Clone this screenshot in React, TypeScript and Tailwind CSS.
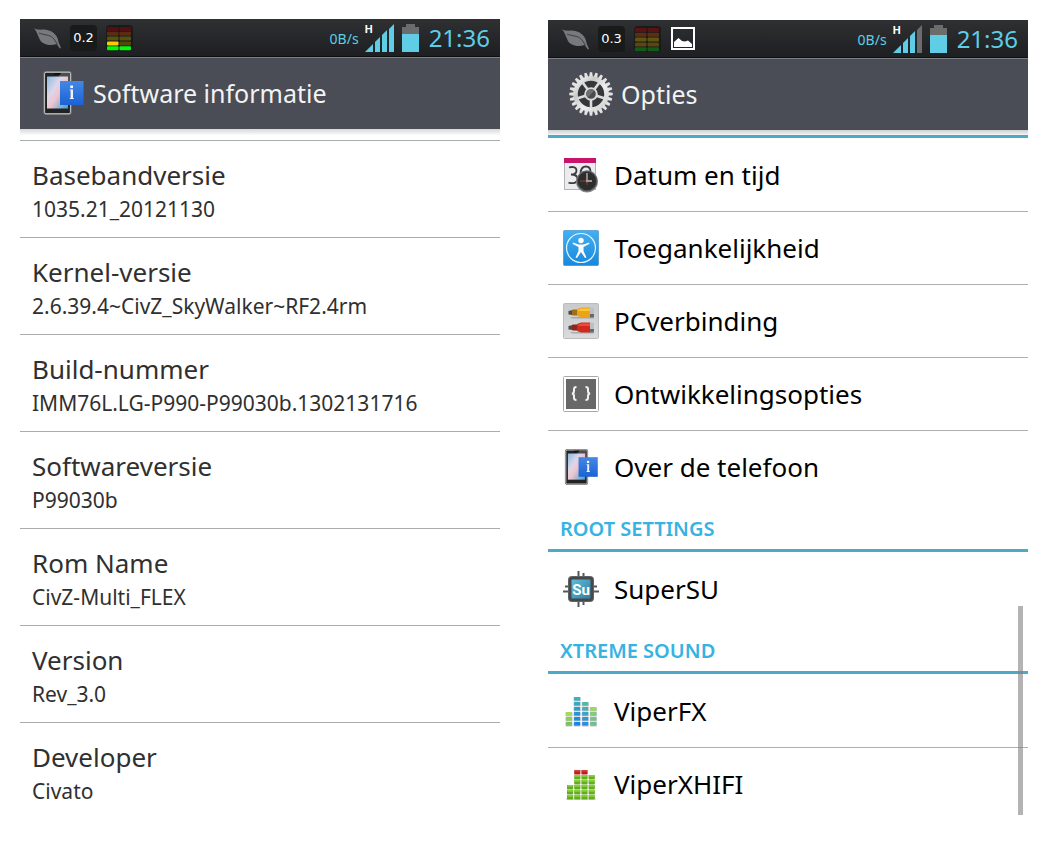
import React from 'react';

interface InfoItem {
  label: string;
  value: string;
}

interface OptionItem {
  label: string;
  icon: React.ReactNode;
}

interface OptionSection {
  title?: string;
  items: OptionItem[];
}

const INFO_ITEMS: InfoItem[] = [
  { label: 'Basebandversie', value: '1035.21_20121130' },
  { label: 'Kernel-versie', value: '2.6.39.4~CivZ_SkyWalker~RF2.4rm' },
  { label: 'Build-nummer', value: 'IMM76L.LG-P990-P99030b.1302131716' },
  { label: 'Softwareversie', value: 'P99030b' },
  { label: 'Rom Name', value: 'CivZ-Multi_FLEX' },
  { label: 'Version', value: 'Rev_3.0' },
  { label: 'Developer', value: 'Civato' },
];

/* ---------- Status bar ---------- */

function LeafIcon() {
  return (
    <svg width="27" height="21" viewBox="0 0 27 21" aria-hidden="true">
      <path d="M0 0C4 3 9 .5 15 2.500C21 4.500 24 9 24.500 14L27 20L26 20.500L22.500 16C17 18 9 17 6 12C4 8 3 4 0 0Z" fill="#77797a" />
      <path d="M5 5C10 7.500 16 6 20 11C21.500 13 22.500 15 23.500 16.500" fill="none" stroke="#3c3e40" strokeWidth="1" />
    </svg>
  );
}

// Each entry is a row of the meter, left cell and right cell
const METER_ACTIVE = [
  ['#541010', '#541010'],
  ['#5c2c12', '#5c2c12'],
  ['#55510e', '#55510e'],
  ['#ffc800', '#56460e'],
  ['#00fb04', '#00fb04'],
];

const METER_IDLE = [
  ['#5a1213', '#5a1213'],
  ['#602d14', '#602d14'],
  ['#5d5612', '#5d5612'],
  ['#5c4711', '#5c4711'],
  ['#125c17', '#125c17'],
];

function MeterIcon({ rows }: { rows: string[][] }) {
  return (
    <svg width="27" height="26" viewBox="0 0 27 26" aria-hidden="true">
      <rect width="27" height="26" rx="4" fill="#191a1a" />
      {rows.map(([left, right], i) => (
        <g key={i}>
          <rect x="1" y={2 + i * 4.8} width="11.500" height="4" rx="1" fill={left} />
          <rect x="13.500" y={2 + i * 4.8} width="11.500" height="4" rx="1" fill={right} />
        </g>
      ))}
    </svg>
  );
}

function PictureIcon() {
  return (
    <svg width="26" height="24" viewBox="0 0 26 24" aria-hidden="true">
      <rect x="2" y="1" width="22" height="21" fill="none" stroke="#fff" strokeWidth="2" />
      <path d="M4 20V15L8.500 11L12 14L15 14.500L18 13.500L22 17V20Z" fill="#fff" />
    </svg>
  );
}

function SignalIcon({ full }: { full: boolean }) {
  return (
    <svg width="29" height="28" viewBox="0 0 29 28" aria-hidden="true">
      <g fill="#5fcde6">
        <path d="M0 28L8 20V28Z" />
        <path d="M10 18L15 13V28H10Z" />
        <path d="M17 11L22 6V28H17Z" />
      </g>
      <path d="M24 5L29 0V28H24Z" fill={full ? '#5fcde6' : '#6c6c6c'} />
    </svg>
  );
}

function BatteryIcon() {
  return (
    <svg width="17" height="28" viewBox="0 0 17 28" aria-hidden="true">
      <path d="M4 0H13V3H17V11H0V3H4Z" fill="#6c6c6c" />
      <rect y="10" width="17" height="18" fill="#5fcde6" />
    </svg>
  );
}

interface StatusBarProps {
  load: string;
  meter: string[][];
  fullSignal: boolean;
  hasPicture?: boolean;
}

function StatusBar({ load, meter, fullSignal, hasPicture }: StatusBarProps) {
  return (
    <div className="flex h-[38px] items-center justify-between border-b border-[#0e0f11] bg-linear-to-b from-[#2e3032] to-[#1e1f22] pl-3.5 pr-2.5 pt-px">
      <div className="flex items-center gap-[9px]">
        <LeafIcon />
        <span className="flex h-[26px] w-[27px] items-center justify-center rounded bg-[#191a1a] font-['DejaVu_Sans',sans-serif] text-[13px] text-white">
          {load}
        </span>
        <MeterIcon rows={meter} />
        {hasPicture && <PictureIcon />}
      </div>
      <div className="flex items-center text-[#5fcde6]">
        <span className="mr-1.5 text-[14px]">0B/s</span>
        <div className="relative mr-2">
          <SignalIcon full={fullSignal} />
          <span className="absolute left-0 top-0 font-['Liberation_Sans',sans-serif] text-[11px] font-bold leading-[10px] text-white">H</span>
        </div>
        <BatteryIcon />
        <span className="ml-2.5 text-[24px] leading-8">21:36</span>
      </div>
    </div>
  );
}

function TitleBar({ title, icon }: { title: string; icon: React.ReactNode }) {
  return (
    <header className="flex h-[72px] items-center gap-2 border-t border-[#7c7f83] bg-[#4a4d55] pb-0.5 pl-[21px] text-[#f3f3f3]">
      {icon}
      <h1 className="text-[25px] leading-8">{title}</h1>
    </header>
  );
}

/* ---------- Row icons ---------- */

function PhoneIcon({ size, id }: { size: number; id: string }) {
  return (
    <svg width={size} height={size} viewBox="-2 0 44 44" aria-hidden="true">
      <defs>
        <linearGradient id={`${id}-screen`} x1="0" y1="0" x2="1" y2="1">
          <stop offset="0" stopColor="#8bbbe0" />
          <stop offset=".35" stopColor="#ddd6e8" />
          <stop offset=".55" stopColor="#eec4cf" />
          <stop offset="1" stopColor="#3aa0d0" />
        </linearGradient>
        <linearGradient id={`${id}-info`} x1="0" y1="0" x2="0" y2="1">
          <stop offset="0" stopColor="#4488e5" />
          <stop offset="1" stopColor="#1b62d5" />
        </linearGradient>
      </defs>
      <rect x="1" y=".7" width="27" height="42.600" rx="2" fill="#202224" stroke="#777" strokeWidth="1.400" />
      <rect x="1.600" y="1.300" width="25.800" height="41.400" rx="1.500" fill="none" stroke="#ddd" strokeWidth=".8" />
      <path d="M14 2H27V22Z" fill="#4c4e50" />
      <path d="M11 2H18L17 4H12Z" fill="#111" />
      <rect x="4" y="5.500" width="21" height="32" fill={`url(#${id}-screen)`} />
      <rect x="17" y="10" width="23.500" height="24" fill={`url(#${id}-info)`} />
      <rect x="27.300" y="14.500" width="2.700" height="2.600" fill="#fff" />
      <path d="M26.800 18.500H30V27H30.800V28H26.800V27H27.600V19.500H26.800Z" fill="#eef3fc" />
    </svg>
  );
}

function GearIcon() {
  const teeth = Array.from({ length: 24 }, (_, i) => i * 15);
  const spokes = [90, 162, 234, 306, 18];
  return (
    <svg width="44" height="44" viewBox="0 0 44 44" aria-hidden="true">
      <defs>
        <linearGradient id="gear-metal" x1="0" y1="0" x2="1" y2="1">
          <stop offset="0" stopColor="#f7f7f7" />
          <stop offset=".3" stopColor="#c9c9c9" />
          <stop offset=".6" stopColor="#efefef" />
          <stop offset="1" stopColor="#cdcdcd" />
        </linearGradient>
      </defs>
      <circle cx="22" cy="22" r="17" fill="#35373b" />
      {teeth.map((angle) => (
        <path key={angle} d="M19.900 6.500L20.800 .3H23.200L24.100 6.500Z" fill="#e3e3e3" transform={`rotate(${angle} 22 22)`} />
      ))}
      <circle cx="22" cy="22" r="15.500" fill="none" stroke="url(#gear-metal)" strokeWidth="4.500" />
      {spokes.map((angle) => (
        <path key={angle} d="M26 20.700H36V23.300H26Z" fill="#dcdcdc" transform={`rotate(${angle} 22 22)`} />
      ))}
      <circle cx="22" cy="22" r="5.800" fill="#4a4b4d" stroke="#d9d9d9" strokeWidth="2" />
      <path d="M18.600 25.400A4.800 4.800 0 0 1 25.400 18.600Z" fill="#6d7072" />
    </svg>
  );
}

function DateTimeIcon() {
  return (
    <svg width="36" height="36" viewBox="0 0 36 36" aria-hidden="true">
      <rect x="1.500" y="1.500" width="31" height="31" fill="#ececee" stroke="#b4b4b4" />
      <rect x="1" y="1" width="32" height="5" fill="#c9146c" />
      <g fill="none" stroke="#3d3d3f" strokeWidth="1.800">
        <path d="M6 10.500C8 9.800 13.500 9.300 13.500 13.500C13.500 16 12 17.500 8 17.500C12 17.500 14.500 19 14.500 22C14.500 26 10 27 5.500 25.600" />
        <path d="M17.500 16C18 10.500 21 9.500 23 9.500C26 9.500 27.500 11.500 27.500 15" />
      </g>
      <circle cx="24" cy="24.500" r="11" fill="#8e8f91" />
      <circle cx="24" cy="24" r="9.800" fill="#2d2d2e" stroke="#58595a" strokeWidth="1.200" />
      <path d="M24 16V24H29" fill="none" stroke="#bdbdbd" strokeWidth="1.300" />
      <path d="M17 24H24M24 24V28" stroke="#91524a" strokeWidth=".8" />
      <circle cx="24" cy="24" r="1.200" fill="#e58579" />
    </svg>
  );
}

function AccessibilityIcon() {
  return (
    <svg width="36" height="36" viewBox="0 0 36 36" aria-hidden="true">
      <defs>
        <linearGradient id="access-bg" x1="0" y1="0" x2="0" y2="1">
          <stop offset="0" stopColor="#43b0f3" />
          <stop offset="1" stopColor="#1788dc" />
        </linearGradient>
      </defs>
      <rect x=".5" y=".5" width="35" height="35" rx="1" fill="url(#access-bg)" stroke="#3c87bd" strokeOpacity=".6" />
      <circle cx="18" cy="18" r="14.500" fill="none" stroke="#e4f4fe" strokeWidth="1.200" />
      <circle cx="18" cy="10.500" r="2.700" fill="#fff" />
      <path d="M10 12.500L15.500 14.500H20.500L26 12.500L26.500 13.800L20.500 17V21L23.500 27.500L22 28L18 22L14 28L12.500 27.500L15.500 21V17L9.500 13.800Z" fill="#fff" />
    </svg>
  );
}

interface PlugProps {
  y: number;
  body: string;
  light: string;
  dark: string;
}

function Plug({ y, body, light, dark }: PlugProps) {
  return (
    <g transform={`translate(0 ${y})`}>
      <path d="M7 10H28L31 9V11.500H9Z" fill="#6b6b6b" opacity=".4" />
      <path d="M5.500 4L10 3V8L5.500 7.500Z" fill="#4c4948" />
      <rect x="9" y="2.500" width="6" height="6" rx="1" fill={dark} />
      <path d="M14 2L18 .5H27V10.500H18L14 9Z" fill={body} />
      <path d="M15 3L18 1.500H27V4H15Z" fill={light} />
      <path d="M27 .5H29.500Q31 .5 31 2V9Q31 10.500 29.500 10.500H27Z" fill="#bcc0c2" />
      <path d="M27 7H31V9Q31 10.500 29.500 10.500H27Z" fill="#65696b" />
    </g>
  );
}

function PlugIcon() {
  return (
    <svg width="36" height="36" viewBox="0 0 36 36" aria-hidden="true">
      <defs>
        <linearGradient id="plug-bg" x1="0" y1="0" x2="0" y2="1">
          <stop offset="0" stopColor="#c9cacb" />
          <stop offset="1" stopColor="#dadbdc" />
        </linearGradient>
      </defs>
      <rect x=".5" y=".5" width="35" height="35" rx="1" fill="url(#plug-bg)" stroke="#bbbcbd" />
      <Plug y={4} body="#eaa31b" light="#ffc62f" dark="#a36c16" />
      <Plug y={19} body="#d02a1f" light="#ef4a3b" dark="#8f241c" />
    </svg>
  );
}

function DeveloperIcon() {
  return (
    <svg width="36" height="36" viewBox="0 0 36 36" aria-hidden="true">
      <rect x=".5" y=".5" width="35" height="35" rx="1" fill="#fff" stroke="#a9a9a9" />
      <rect x="3" y="3" width="30" height="30" fill="#686868" />
      <g fill="none" stroke="#f2f2f2" strokeWidth="2">
        <path d="M13.500 11C11.500 11 11 11.500 11 13V15C11 16.700 10.300 17.500 8.800 17.500C10.300 17.500 11 18.300 11 20V22C11 23.500 11.500 24 13.500 24" />
        <path d="M22.500 11C24.500 11 25 11.500 25 13V15C25 16.700 25.700 17.500 27.200 17.500C25.700 17.500 25 18.300 25 20V22C25 23.500 24.500 24 22.500 24" />
      </g>
    </svg>
  );
}

function SuperSUIcon() {
  return (
    <svg width="36" height="36" viewBox="0 0 36 36" aria-hidden="true">
      <defs>
        <linearGradient id="su-bg" x1="0" y1="0" x2="1" y2="1">
          <stop offset="0" stopColor="#62bcd8" />
          <stop offset="1" stopColor="#2e7fa0" />
        </linearGradient>
      </defs>
      <path d="M15.500 0V36M20.500 2V34M0 20.500H36M2 15.500H34" stroke="#55585a" strokeWidth="2" />
      <rect x="5.500" y="5.500" width="25" height="25" rx="3" fill="#46484b" stroke="#5f6264" />
      <rect x="8.500" y="8.500" width="19" height="19" rx="1" fill="url(#su-bg)" />
      <text x="18" y="24" textAnchor="middle" fontFamily="Roboto, sans-serif" fontWeight="bold" fontSize="15" fill="#fff">Su</text>
    </svg>
  );
}

const VIPER_FX_COLUMNS = [
  ['#7bbf62', '#8ccf55', '#a4dc55'],
  ['#1684e5', '#1c8ede', '#2496d8', '#2b9dce', '#36a9c4', '#3eb0ba'],
  ['#2a8de0', '#3098d2', '#3ba3c7', '#45afba', '#51b9a7'],
  ['#6fbe90', '#76c486', '#80cb74', '#98dc55'],
];

function ViperFXIcon() {
  return (
    <svg width="36" height="36" viewBox="0 0 36 36" aria-hidden="true">
      {VIPER_FX_COLUMNS.map((cells, col) =>
        cells.map((color, i) => (
          <g key={`${col}-${i}`}>
            <rect x={2.5 + col * 8.1} y={29 - i * 5} width="7" height="4.600" rx=".8" fill="#b9bdc2" />
            <rect x={3 + col * 8.1} y={29 - i * 5} width="6" height="3.600" rx=".6" fill={color} />
          </g>
        ))
      )}
    </svg>
  );
}

const VIPER_HIFI_COLUMNS = [3, 6, 6, 5];

function ViperXHIFIIcon() {
  return (
    <svg width="36" height="36" viewBox="0 0 36 36" aria-hidden="true">
      <rect x="3" y="32" width="30" height="2" rx="1" fill="#ddd" />
      {VIPER_HIFI_COLUMNS.map((count, col) =>
        Array.from({ length: count }, (_, i) => (
          <g key={`${col}-${i}`}>
            <rect x={4 + col * 7.2} y={29 - i * 5} width="6.200" height="4.400" rx=".6" fill={i === 5 ? '#b8201b' : '#63ad1e'} />
            <rect x={4.5 + col * 7.2} y={29 - i * 5} width="5.200" height="1.800" rx=".5" fill={i === 5 ? '#d0403a' : '#8bd03c'} />
          </g>
        ))
      )}
    </svg>
  );
}

const OPTION_SECTIONS: OptionSection[] = [
  {
    items: [
      { label: 'Datum en tijd', icon: <DateTimeIcon /> },
      { label: 'Toegankelijkheid', icon: <AccessibilityIcon /> },
      { label: 'PCverbinding', icon: <PlugIcon /> },
      { label: 'Ontwikkelingsopties', icon: <DeveloperIcon /> },
      { label: 'Over de telefoon', icon: <PhoneIcon size={36} id="about" /> },
    ],
  },
  {
    title: 'ROOT SETTINGS',
    items: [{ label: 'SuperSU', icon: <SuperSUIcon /> }],
  },
  {
    title: 'XTREME SOUND',
    items: [
      { label: 'ViperFX', icon: <ViperFXIcon /> },
      { label: 'ViperXHIFI', icon: <ViperXHIFIIcon /> },
    ],
  },
];

/* ---------- Screens ---------- */

function SoftwareInfoScreen() {
  return (
    <section>
      <StatusBar load="0.2" meter={METER_ACTIVE} fullSignal />
      <TitleBar title="Software informatie" icon={<PhoneIcon size={44} id="info" />} />
      <div className="h-[11px] bg-linear-to-b from-[#d8d8d8] to-white to-60%" />
      <dl>
        {INFO_ITEMS.map((item) => (
          <div key={item.label} className="h-[97px] border-t border-[#a9adaf] pl-3 pt-4 text-[#303030]">
            <dt className="text-[26px] leading-9">{item.label}</dt>
            <dd className="text-[21px] leading-8">{item.value}</dd>
          </div>
        ))}
      </dl>
    </section>
  );
}

function OptionsScreen() {
  return (
    <section className="relative mt-px">
      <StatusBar load="0.3" meter={METER_IDLE} fullSignal={false} hasPicture />
      <TitleBar title="Opties" icon={<GearIcon />} />
      <div className="h-[5px] bg-linear-to-b from-[#cfcfcf] to-[#f4f4f4]" />
      {OPTION_SECTIONS.map((section, i) => (
        <div key={i}>
          {section.title && (
            <h2 className="h-[46px] pl-3 pt-2.5 text-[20px] font-semibold leading-8 text-[#36b3e2]">
              {section.title}
            </h2>
          )}
          <ul className="divide-y divide-[#adb0b2] border-t-[3px] border-[#4baac8] pt-px">
            {section.items.map((item) => (
              <li key={item.label}>
                <button type="button" className="flex h-[72px] w-full items-center gap-[15px] pl-[15px] text-left text-[26px] leading-9 text-black">
                  {item.icon}
                  {item.label}
                </button>
              </li>
            ))}
          </ul>
        </div>
      ))}
      {/* Scroll thumb */}
      <div className="absolute bottom-[5px] right-[5px] h-[209px] w-[5px] bg-[#808080]/60" />
    </section>
  );
}

export default function App() {
  return (
    <main className="grid min-h-screen grid-cols-2 items-start gap-12 bg-white pb-5 pl-5 pr-4 pt-[19px] font-['Noto_Sans',sans-serif]">
      <SoftwareInfoScreen />
      <OptionsScreen />
    </main>
  );
}
